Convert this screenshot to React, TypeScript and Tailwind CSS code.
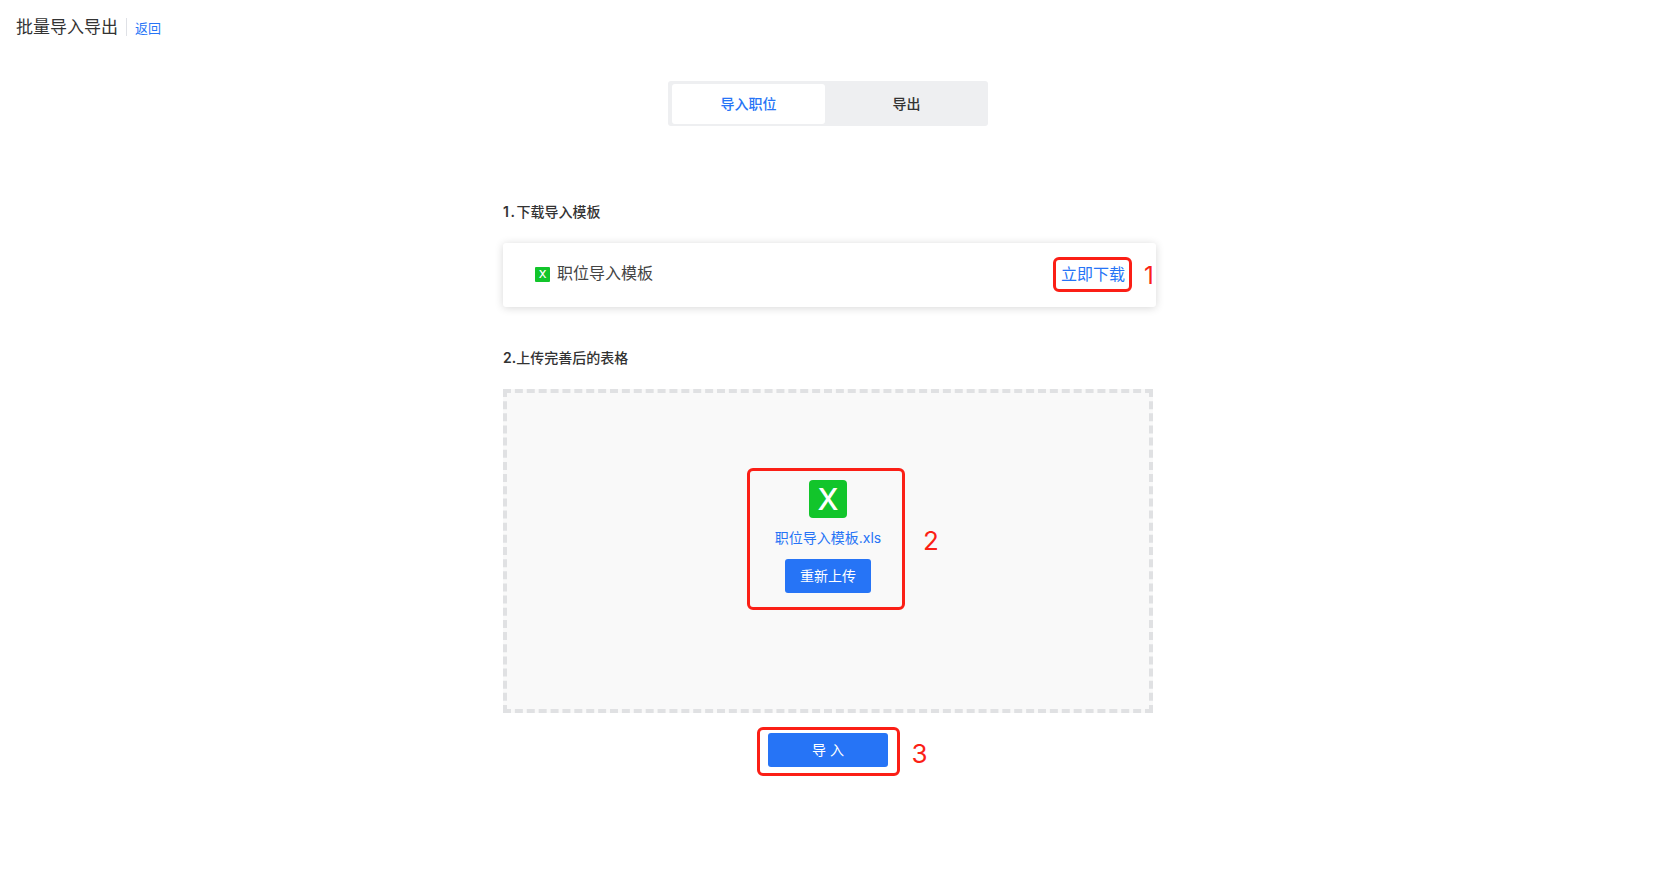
const font = { fontFamily: '"Inter", "Noto Sans CJK SC", sans-serif' };

function ExcelIcon({ large }: { large?: boolean }) {
  return large ? (
    <div className="flex h-[38px] w-[38px] items-center justify-center rounded-[4px] bg-[#12c52b] text-[30px] font-medium leading-none text-white">
      X
    </div>
  ) : (
    <div className="flex h-[15px] w-[15px] items-center justify-center rounded-[1px] bg-[#12c52b] text-[11px] font-medium leading-none text-white">
      X
    </div>
  );
}

export default function App() {
  return (
    <div className="h-[887px] overflow-hidden bg-white text-[#222]" style={font}>
      {/* Header */}
      <div className="flex h-[54px] items-center pl-4">
        <h1 className="text-[17px] font-normal leading-none text-[#333]">批量导入导出</h1>
        <div className="ml-2 h-[18px] w-px bg-[#dfe1e6]" />
        <a className="ml-2 pt-0.5 text-[13px] leading-none text-[#2674f6]">返回</a>
      </div>

      {/* Tabs */}
      <div className="mt-[27px] flex justify-center">
        <div className="ml-[1px] flex h-[45px] w-[320px] rounded-[3px] bg-[#eeeff1] py-[3px] pl-1">
          <div className="flex h-[40px] w-[153px] items-center justify-center rounded-[3px] bg-white text-sm font-medium text-[#2674f6]">
            导入职位
          </div>
          <div className="flex h-[40px] flex-1 items-center justify-center text-sm font-medium text-[#333]">
            导出
          </div>
        </div>
      </div>

      <div className="mx-auto mt-[76px] w-[653px] translate-x-[2px]">
        {/* Step 1 */}
        <div className="text-sm font-medium leading-5 text-[#333]">
          <span className="font-semibold tracking-[1.5px]">1.</span>下载导入模板
        </div>
        <div className="mt-[21px] flex h-[64px] items-center rounded-[3px] bg-white pl-8 pr-[24px] shadow-[0_1px_8px_rgba(0,0,0,0.16)]">
          <div className="-translate-y-[1px]">
            <ExcelIcon />
          </div>
          <span className="ml-[7px] -translate-y-[2px] text-base text-[#444]">职位导入模板</span>
          <div className="relative ml-auto -translate-y-[1px]">
            <div className="flex h-[35px] w-[79px] items-center justify-center rounded-[6px] border-[3px] border-[#fb1f16] pb-[1px] pl-[1px] text-base text-[#2674f6]">
              立即下载
            </div>
            <span className="absolute left-[91px] top-[3px] text-[24px] leading-8 text-[#fb1f16]">1</span>
          </div>
        </div>

        {/* Step 2 */}
        <div className="mt-[41px] text-sm font-medium leading-5 text-[#333]">
          <span className="font-semibold">2.</span>上传完善后的表格
        </div>
        <div className="mt-[21px] flex h-[324px] w-[650px] items-start justify-center border-4 border-dashed border-[#e0e1e3] bg-[#f9f9f9] pt-[75px]">
          <div className="relative -translate-x-[2px]">
            <div className="flex h-[142px] w-[158px] flex-col items-center rounded-[6px] border-[3px] border-[#fb1f16] pl-[4px] pt-[9px]">
              <ExcelIcon large />
              <div className="mt-[10px] text-sm leading-5 text-[#2674f6]">职位导入模板.xls</div>
              <button className="mt-[11px] h-[34px] w-[86px] rounded-[3px] bg-[#2674f6] pb-[1px] text-sm text-white">
                重新上传
              </button>
            </div>
            <span className="absolute left-[176px] top-[57px] text-[26px] leading-8 text-[#fb1f16]">2</span>
          </div>
        </div>

        {/* Import button */}
        <div className="mt-[14px] flex w-[650px] justify-center">
          <div className="relative">
            <div className="flex h-[49px] w-[143px] justify-center rounded-[6px] border-[3px] border-[#fb1f16] pt-[3px]">
              <button className="h-[34px] w-[120px] rounded-[3px] bg-[#2674f6] pb-[1px] pl-[4px] text-sm tracking-[4px] text-white">
                导入
              </button>
            </div>
            <span className="absolute left-[155px] top-[11px] text-[26px] leading-8 text-[#fb1f16]">3</span>
          </div>
        </div>
      </div>
    </div>
  );
}
